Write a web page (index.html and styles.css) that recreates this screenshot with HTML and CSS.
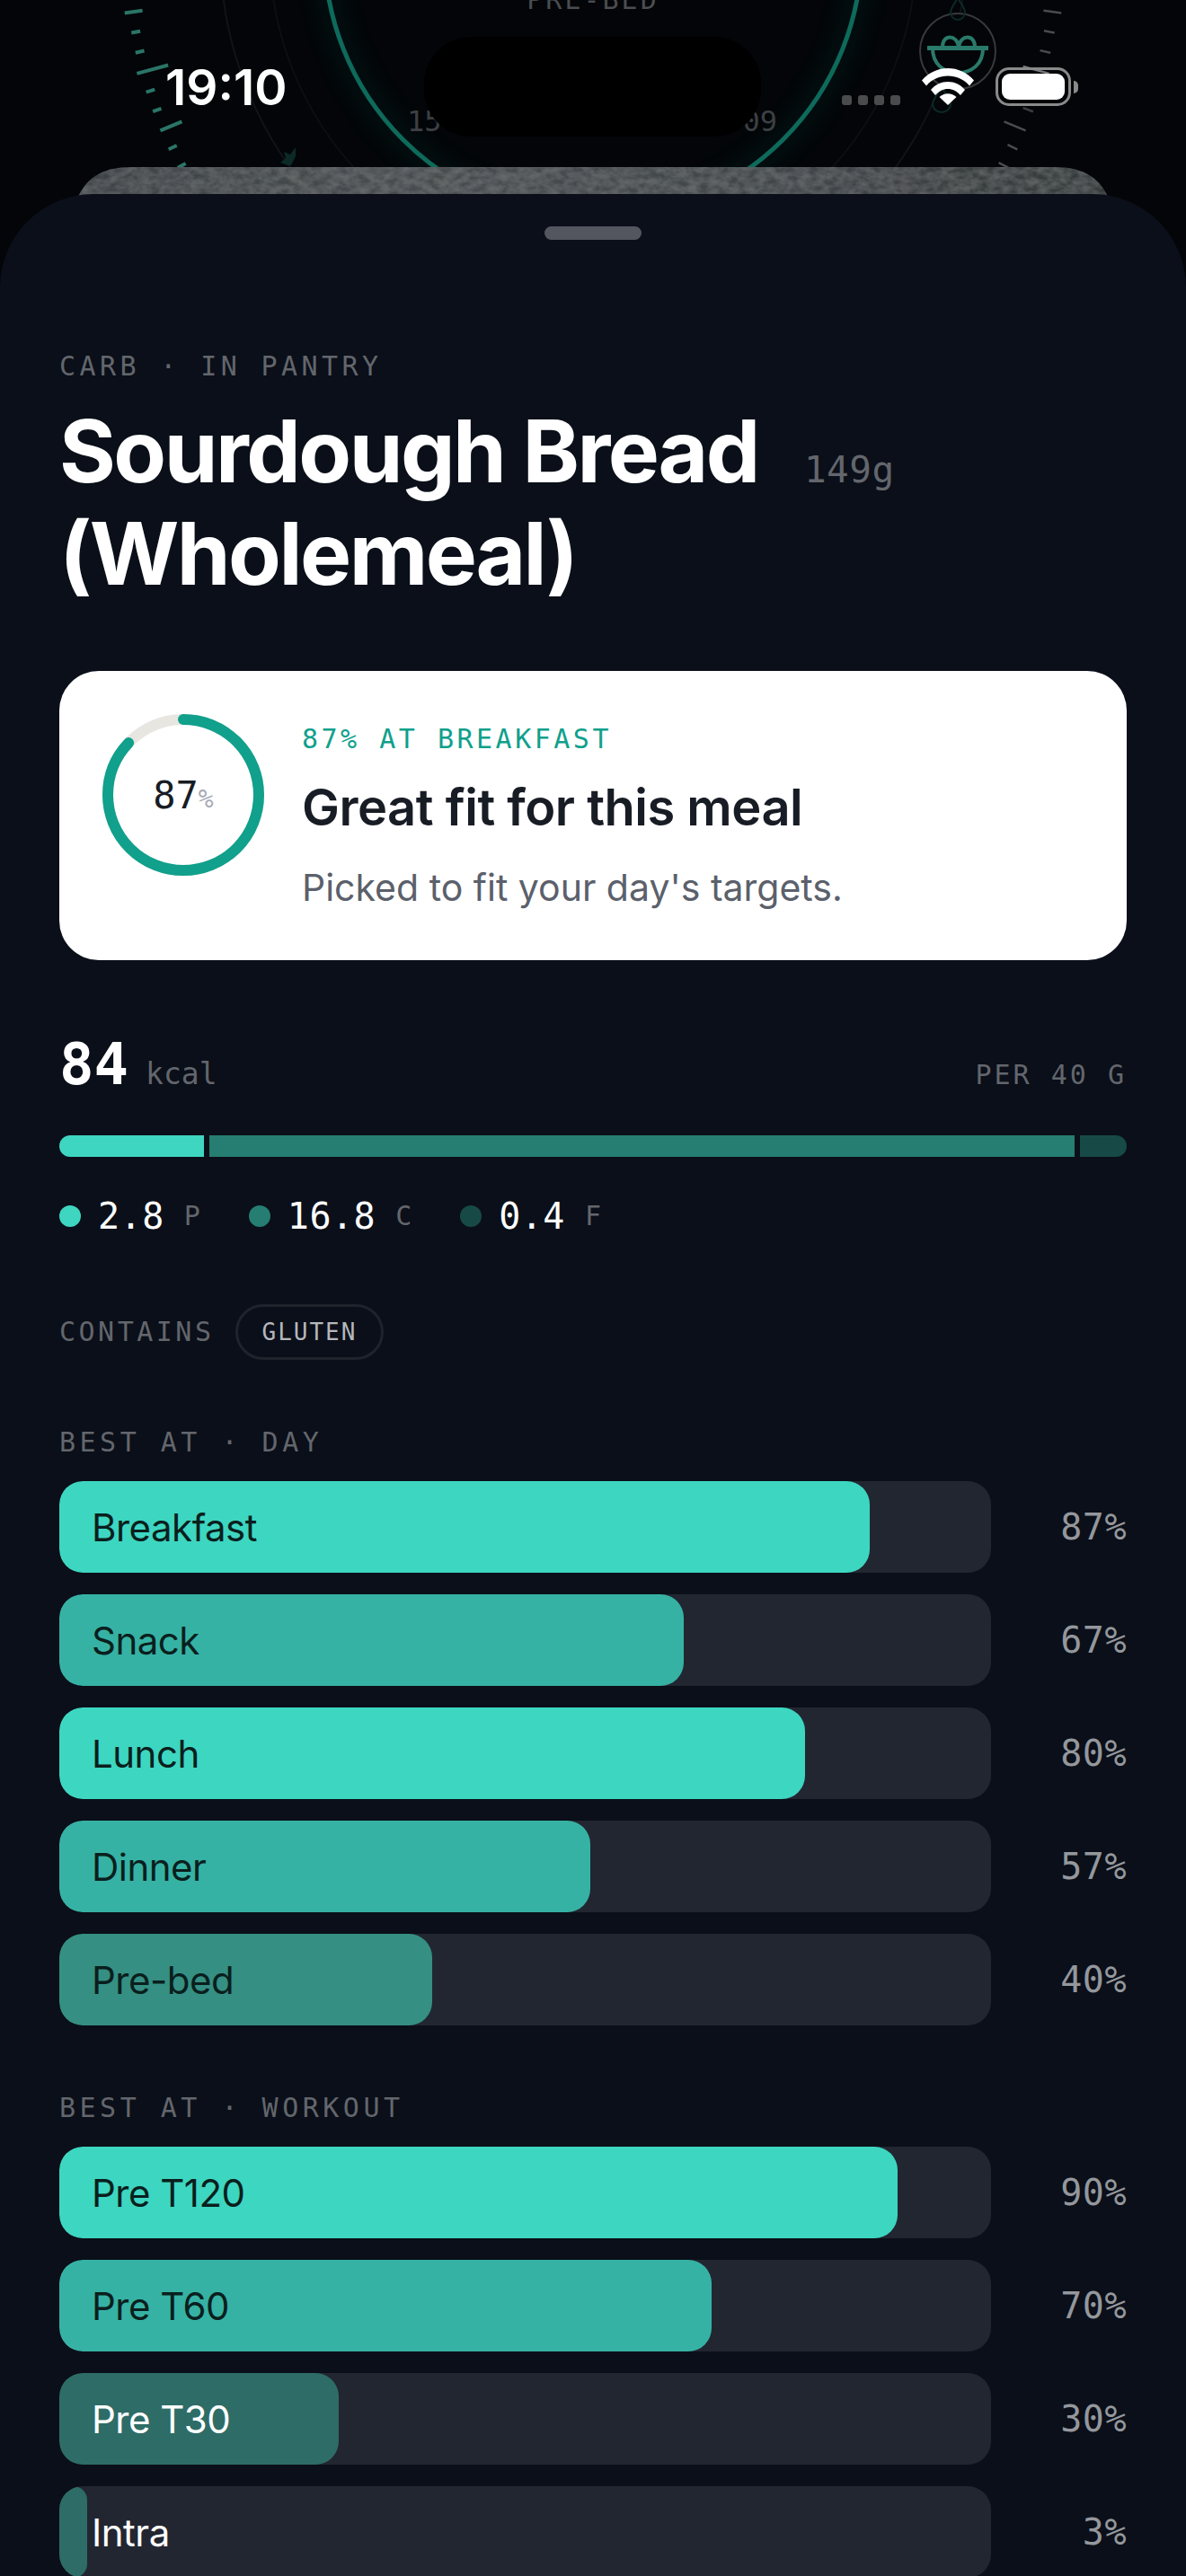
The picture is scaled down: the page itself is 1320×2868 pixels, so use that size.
FILE: index.html
```html
<!DOCTYPE html>
<html lang="en">
<head>
  <meta charset="UTF-8">
  <meta name="viewport" content="width=device-width, initial-scale=1.0">
  <title>Sourdough Bread</title>
  <link rel="stylesheet" href="styles.css">
</head>
<body>
  <div class="phone">
    <!-- dial behind the sheet -->
    <svg class="dial" width="1320" height="300" viewBox="0 0 1320 300">
      <defs>
        <filter id="grain" x="0" y="0" width="100%" height="100%">
          <feTurbulence type="fractalNoise" baseFrequency="0.09 0.14" numOctaves="3" seed="7"/>
          <feColorMatrix values="0 0 0 0 1  0 0 0 0 1  0 0 0 0 1  0.13 0 0 0 -0.03"/>
          <feComposite in2="SourceGraphic" operator="in"/>
          <feMerge><feMergeNode in="SourceGraphic"/><feMergeNode/></feMerge>
        </filter>
        <linearGradient id="slab" x1="0" x2="1" y1="0" y2="0">
          <stop offset="0" stop-color="#3d4245"/>
          <stop offset="0.35" stop-color="#484d50"/>
          <stop offset="0.7" stop-color="#404548"/>
          <stop offset="1" stop-color="#343a3b"/>
        </linearGradient>
        <filter id="glow" x="-20%" y="-20%" width="140%" height="140%">
          <feGaussianBlur stdDeviation="14"/>
        </filter>
      </defs>
      <circle cx="660" cy="-56" r="299" fill="none" stroke="#0f6a5a" stroke-width="14" opacity="0.2" filter="url(#glow)"/>
      <circle cx="660" cy="-56" r="299" fill="none" stroke="#0e6a5b" stroke-width="5"/>
      <circle cx="660" cy="-56" r="415" fill="none" stroke="#111417" stroke-width="2"/>
      <circle cx="660" cy="-56" r="360" fill="none" stroke="#0c0f12" stroke-width="2"/>
      <g transform="translate(660 -56)" stroke="#4a4b4c" stroke-width="2.5">
        <line x1="506" x2="526" transform="rotate(7.7)"/>
        <line x1="510" x2="522" transform="rotate(10.2)"/>
        <line x1="510" x2="522" transform="rotate(12.7)"/>
        <line x1="496" x2="526" transform="rotate(15.2)" stroke="#77797a"/>
        <line x1="510" x2="522" transform="rotate(17.7)"/>
        <line x1="510" x2="522" transform="rotate(20.2)" stroke="#3c3d3e"/>
        <line x1="496" x2="522" transform="rotate(22.7)"/>
        <line x1="510" x2="522" transform="rotate(25.2)"/>
        <line x1="510" x2="522" transform="rotate(27.7)"/>
      </g>
      <g transform="translate(660 -56)" stroke="#2a7568" stroke-width="4">
        <line x1="-506" x2="-526" transform="rotate(-7.7)"/>
        <line x1="-512" x2="-522" transform="rotate(-10.2)"/>
        <line x1="-512" x2="-522" transform="rotate(-12.7)"/>
        <line x1="-490" x2="-526" transform="rotate(-15.2)"/>
        <line x1="-512" x2="-522" transform="rotate(-17.7)"/>
        <line x1="-512" x2="-522" transform="rotate(-20.2)"/>
        <line x1="-496" x2="-522" transform="rotate(-22.7)"/>
        <line x1="-512" x2="-522" transform="rotate(-25.2)"/>
        <line x1="-512" x2="-522" transform="rotate(-27.7)"/>
      </g>
      <text class="dial-label" x="660" y="10" text-anchor="middle">PRE-BED</text>
      <text class="dial-time" x="453" y="146">15</text>
      <text class="dial-time" x="865" y="146" text-anchor="end">09</text>
      <!-- small meal marker -->
      <circle cx="1066" cy="57" r="42" fill="#030508" stroke="#37393b" stroke-width="2"/>
      <path d="M1066 -2c-4 6-8 11-8 16a8 8 0 0 0 16 0c0-5-4-10-8-16z" fill="none" stroke="#0c2a27" stroke-width="2"/>
      <path d="M1048 98c-4 6-10 12-10 18a10 9 0 0 0 20 0c0-6-6-12-10-18z" fill="none" stroke="#0c2a27" stroke-width="2"/>
      <g fill="none" stroke="#2a7a6a" stroke-width="4">
        <path d="M1038 54c0 17 12 27 28 27s28-10 28-27"/>
        <path d="M1049 52c0-14 16-14 18 0"/>
        <path d="M1067 52c2-14 18-14 18 0"/>
        <path d="M1032 53.500h68" stroke-width="5"/>
      </g>
      <path d="M320 184l-8-3 6-5-2-7 7 3 6-8v10l-5 10z" fill="#0c2a27"/>
      <path d="M146 186H1174C1206 186 1226 198 1236 226V240H84V226C94 198 114 186 146 186Z" fill="url(#slab)" filter="url(#grain)"/>
    </svg>

    <div class="island"></div>

    <div class="status">
      <span class="status-time">19:10</span>
      <div class="status-right">
        <div class="signal"><i></i><i></i><i></i><i></i></div>
        <svg class="wifi" width="58" height="42" viewBox="0 0 58 42">
          <path d="M0 14.500C8 5.500 18 1 29 1s21 4.500 29 13.500l-5 6C46.500 13 38 9.500 29 9.500S11.500 13 5 20.500z" fill="#fff"/>
          <path d="M10 25C15 19 22 16 29 16s14 3 19 9l-5 6c-4-4.500-9-7-14-7s-10 2.500-14 7z" fill="#fff"/>
          <path d="M19.500 33c2.500-2.500 6-3.800 9.500-3.800s7 1.300 9.500 3.800L29 42z" fill="#fff"/>
        </svg>
        <div class="battery"><div class="battery-level"></div></div>
        <div class="battery-cap"></div>
      </div>
    </div>

    <main class="sheet">
      <div class="handle"></div>

      <p class="label eyebrow">CARB · IN PANTRY</p>
      <h1 class="food-name">Sourdough Bread <span class="food-weight">149g</span> (Wholemeal)</h1>

      <section class="fit-card">
        <div class="ring">
          <svg width="180" height="180" viewBox="0 0 180 180">
            <circle cx="90" cy="90" r="84" fill="none" stroke="#e8e6e1" stroke-width="12"/>
            <circle class="ring-value" cx="90" cy="90" r="84" fill="none" stroke="#10a08c" stroke-width="12" stroke-linecap="round" stroke-dasharray="459 528"/>
          </svg>
          <div class="ring-text">87<small>%</small></div>
        </div>
        <div class="fit-text">
          <div class="fit-eyebrow">87% AT BREAKFAST</div>
          <h2 class="fit-title">Great fit for this meal</h2>
          <p class="fit-sub">Picked to fit your day's targets.</p>
        </div>
      </section>

      <div class="kcal-row">
        <div class="kcal-value"><span class="kcal">84</span><span class="kcal-unit">kcal</span></div>
        <span class="label">PER 40 G</span>
      </div>

      <div class="macro-bar">
        <div class="seg seg-p"></div>
        <div class="seg seg-c"></div>
        <div class="seg seg-f"></div>
      </div>

      <div class="macros">
        <div class="macro"><i class="dot seg-p"></i><b>2.8</b><span>P</span></div>
        <div class="macro"><i class="dot seg-c"></i><b>16.8</b><span>C</span></div>
        <div class="macro"><i class="dot seg-f"></i><b>0.4</b><span>F</span></div>
      </div>

      <div class="contains">
        <span class="label contains-label">CONTAINS</span>
        <span class="chip">GLUTEN</span>
      </div>

      <p class="label group-title">BEST AT · DAY</p>
      <div class="rows">
        <div class="row">
          <div class="track"><div class="fill high" style="width:87%"></div><span class="row-name">Breakfast</span></div>
          <span class="pct">87%</span>
        </div>
        <div class="row">
          <div class="track"><div class="fill mid" style="width:67%"></div><span class="row-name">Snack</span></div>
          <span class="pct">67%</span>
        </div>
        <div class="row">
          <div class="track"><div class="fill high" style="width:80%"></div><span class="row-name">Lunch</span></div>
          <span class="pct">80%</span>
        </div>
        <div class="row">
          <div class="track"><div class="fill mid" style="width:57%"></div><span class="row-name">Dinner</span></div>
          <span class="pct">57%</span>
        </div>
        <div class="row">
          <div class="track"><div class="fill soft" style="width:40%"></div><span class="row-name">Pre-bed</span></div>
          <span class="pct">40%</span>
        </div>
      </div>

      <p class="label group-title group-two">BEST AT · WORKOUT</p>
      <div class="rows">
        <div class="row">
          <div class="track"><div class="fill high" style="width:90%"></div><span class="row-name">Pre T120</span></div>
          <span class="pct">90%</span>
        </div>
        <div class="row">
          <div class="track"><div class="fill mid" style="width:70%"></div><span class="row-name">Pre T60</span></div>
          <span class="pct">70%</span>
        </div>
        <div class="row">
          <div class="track"><div class="fill low" style="width:30%"></div><span class="row-name light">Pre T30</span></div>
          <span class="pct">30%</span>
        </div>
        <div class="row">
          <div class="track"><div class="fill low" style="width:3%"></div><span class="row-name light">Intra</span></div>
          <span class="pct">3%</span>
        </div>
      </div>
    </main>
  </div>
</body>
</html>
```

FILE: styles.css
```css
* {
  box-sizing: border-box;
}
body {
  margin: 0;
  background-color: #030508;
  font-family: Inter, "Liberation Sans", sans-serif;
}
p, h1, h2 {
  margin: 0;
}
.phone {
  position: relative;
  width: 1320px;
  height: 2868px;
  padding-top: 216px;
  overflow: hidden;
}
.dial {
  position: absolute;
  top: 0;
  left: 0;
}
.dial-label {
  font: 30px "DejaVu Sans Mono", monospace;
  letter-spacing: 3px;
  fill: #4a4d50;
}
.dial-time {
  font: 32px "DejaVu Sans Mono", monospace;
  fill: #3d4043;
}
.island {
  position: absolute;
  top: 41px;
  left: 472px;
  width: 375px;
  height: 111px;
  border-radius: 52px;
  background-color: #000;
}
.status {
  position: absolute;
  top: 0;
  left: 184px;
  right: 120px;
  height: 152px;
  display: flex;
  justify-content: space-between;
}
.status-time {
  margin-top: 65px;
  font-size: 55px;
  line-height: 65px;
  font-weight: 600;
  color: #fff;
}
.status-right {
  display: flex;
  align-items: flex-start;
}
.signal {
  display: flex;
  gap: 7px;
  margin-top: 106px;
  margin-right: 24px;
}
.signal i {
  width: 11px;
  height: 11px;
  border-radius: 3px;
  background-color: #4a4b4d;
}
.wifi {
  margin-top: 75px;
  margin-right: 24px;
}
.battery {
  margin-top: 75px;
  width: 84px;
  height: 43px;
  padding: 4px;
  border: 3px solid #8a8a8a;
  border-radius: 15px;
}
.battery-level {
  height: 100%;
  border-radius: 9px;
  background-color: #fff;
}
.battery-cap {
  margin-top: 90px;
  margin-left: 3px;
  width: 5px;
  height: 14px;
  border-radius: 0 5px 5px 0;
  background-color: #8a8a8a;
}
.sheet {
  position: relative;
  height: 2652px;
  padding: 36px 66px 0;
  border-radius: 104px 104px 0 0;
  background-color: #0a0f19;
  overflow: hidden;
}
.handle {
  width: 108px;
  height: 15px;
  margin: 0 auto;
  border-radius: 8px;
  background-color: #53555f;
}
.label {
  font-family: "DejaVu Sans Mono", monospace;
  font-size: 30px;
  line-height: 36px;
  letter-spacing: 3px;
  color: #63666c;
}
.eyebrow {
  margin-top: 123px;
  letter-spacing: 4.400px;
}
.food-name {
  margin-top: 19px;
  font-size: 96px;
  line-height: 114px;
  font-weight: 700;
  letter-spacing: -2.500px;
  color: #fff;
}
.food-weight {
  margin-left: 31px;
  font-family: "DejaVu Sans Mono", monospace;
  font-size: 41px;
  line-height: 1;
  font-weight: 400;
  letter-spacing: 0.500px;
  color: #63666c;
}
.fit-card {
  display: flex;
  gap: 42px;
  margin-top: 74px;
  padding: 48px 48px 0;
  height: 322px;
  border-radius: 44px;
  background-color: #fff;
}
.ring {
  position: relative;
  flex-shrink: 0;
  width: 180px;
  height: 180px;
}
.ring-value {
  transform: rotate(-90deg);
  transform-origin: center;
}
.ring-text {
  position: absolute;
  inset: 0;
  display: flex;
  align-items: center;
  justify-content: center;
  font-family: "DejaVu Sans Mono", monospace;
  font-size: 42px;
  color: #181c24;
}
.ring-text small {
  margin-top: 8px;
  font-size: 28px;
  color: #a8abb5;
}
.fit-text {
  padding-top: 10px;
}
.fit-eyebrow {
  font-family: "DejaVu Sans Mono", monospace;
  font-size: 30px;
  line-height: 36px;
  letter-spacing: 3.500px;
  color: #10a08c;
}
.fit-title {
  margin-top: 24px;
  font-size: 56px;
  line-height: 68px;
  font-weight: 600;
  letter-spacing: -0.500px;
  color: #181c24;
}
.fit-sub {
  margin-top: 30px;
  font-size: 41px;
  line-height: 50px;
  color: #5b606b;
}
.kcal-row {
  display: flex;
  justify-content: space-between;
  align-items: baseline;
  margin-top: 78px;
}
.kcal-value {
  display: flex;
  align-items: baseline;
  gap: 19px;
}
.kcal {
  font-family: "DejaVu Sans Mono", monospace;
  font-size: 64px;
  line-height: 76px;
  font-weight: 700;
  color: #fff;
}
.kcal-unit {
  font-family: "DejaVu Sans Mono", monospace;
  font-size: 33px;
  color: #63666c;
}
.macro-bar {
  display: flex;
  gap: 6px;
  height: 24px;
  margin-top: 41px;
  border-radius: 12px;
  overflow: hidden;
}
.seg-p {
  background-color: #3ed6c0;
}
.seg-c {
  background-color: #267d72;
}
.seg-f {
  background-color: #174a47;
}
.seg-p.seg {
  width: 161px;
}
.seg-c.seg {
  width: 963px;
}
.seg-f.seg {
  flex: 1;
}
.macros {
  display: flex;
  gap: 54px;
  margin-top: 42px;
}
.macro {
  display: flex;
  align-items: center;
  font-family: "DejaVu Sans Mono", monospace;
  line-height: 48px;
}
.dot {
  width: 24px;
  height: 24px;
  margin-right: 19px;
  border-radius: 50%;
}
.macro b {
  font-size: 40px;
  font-weight: 400;
  letter-spacing: 0.500px;
  color: #fff;
}
.macro span {
  margin-left: 22px;
  font-size: 30px;
  color: #63666c;
}
.contains {
  display: flex;
  align-items: center;
  gap: 23px;
  margin-top: 74px;
}
.contains-label {
  letter-spacing: 3.500px;
}
.chip {
  height: 62px;
  padding: 0 27px;
  border: 3px solid #1f232c;
  border-radius: 31px;
  font-family: "DejaVu Sans Mono", monospace;
  font-size: 26px;
  line-height: 56px;
  letter-spacing: 2px;
  color: #b5b7bb;
}
.group-title {
  margin-top: 74px;
  letter-spacing: 4.500px;
}
.group-two {
  margin-top: 74px;
}
.rows {
  display: flex;
  flex-direction: column;
  gap: 24px;
  margin-top: 25px;
}
.row {
  display: flex;
  justify-content: space-between;
  align-items: center;
}
.track {
  position: relative;
  display: flex;
  align-items: center;
  width: 1037px;
  height: 102px;
  padding-left: 36px;
  border-radius: 26px;
  background-color: #222631;
  overflow: hidden;
}
.fill {
  position: absolute;
  top: 0;
  bottom: 0;
  left: 0;
  border-radius: 26px;
}
.high {
  background-color: #3dd6c1;
}
.mid {
  background-color: #36b2a4;
}
.soft {
  background-color: #358f83;
}
.low {
  background-color: #2e6c67;
}
.row-name {
  position: relative;
  font-size: 42px;
  letter-spacing: -0.500px;
  color: #0a1f1d;
}
.row-name.light {
  color: #fff;
}
.pct {
  font-family: "DejaVu Sans Mono", monospace;
  font-size: 40px;
  letter-spacing: 0.500px;
  color: #94979c;
}
```
